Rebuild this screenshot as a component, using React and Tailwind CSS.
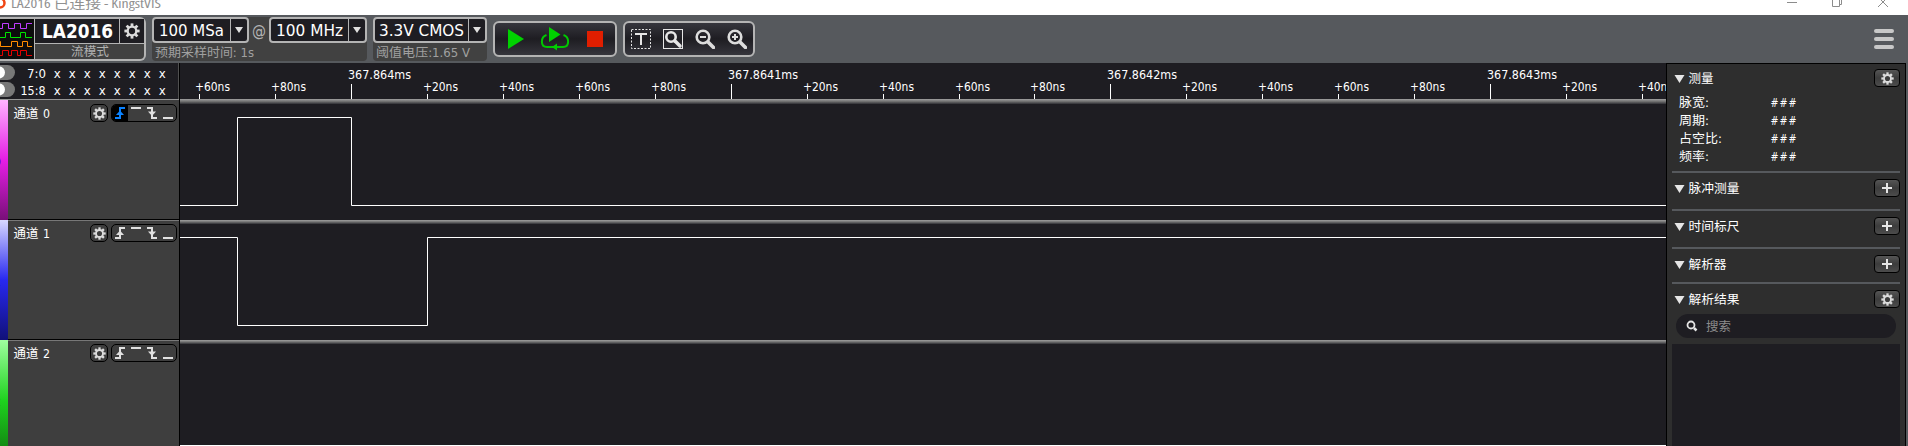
const UI = "font-['DejaVu_Sans_Condensed','DejaVu_Sans','Noto_Sans_CJK_SC',sans-serif] [font-stretch:condensed]";
const CJK = "font-['Noto_Sans_CJK_SC',sans-serif]";

function T({ x, y, w, size, children, fill = "#fff", bold }) {
  return (
    <text
      x={x}
      y={y}
      textLength={w}
      lengthAdjust="spacingAndGlyphs"
      fontSize={size}
      fontWeight={bold ? 700 : 400}
      fill={fill}
    >
      {children}
    </text>
  );
}

/* Single line of text fitted to a fixed width */
function Label({ w, h, size, base, children, fill, bold }) {
  return (
    <svg width={w} height={h} className="block shrink-0 overflow-visible">
      <T x={0} y={base} w={w} size={size} fill={fill} bold={bold}>{children}</T>
    </svg>
  );
}

function Gear({ size, color = "#dcdcdc" }) {
  return (
    <svg width={size} height={size} viewBox="-8 -8 16 16" className="block">
      <circle r="4.3" fill="none" stroke={color} strokeWidth="2.3" />
      {[0, 45, 90, 135, 180, 225, 270, 315].map((a) => (
        <rect key={a} x="-1.4" y="-7.6" width="2.8" height="3" fill={color} transform={`rotate(${a})`} />
      ))}
    </svg>
  );
}

function Logo() {
  return (
    <svg width="34" height="40" className="block bg-[#0c0c0c]">
      <g fill="none" strokeWidth="1">
        <path stroke="#c03cff" d="M0 9.500H2.500V4.500H8.500V9.500H14.500V4.500H20.500V9.500H26.500V4.500H32" />
        <path stroke="#00e600" d="M0 18.500H5.500V13.500H10.500V18.500H20.500V13.500H25.500V18.500H32" />
        <path stroke="#ff8c00" d="M0 22.500H.5V27.500H11.500V22.500H17.500V27.500H22.500V22.500H27.500V27.500H32" />
        <path stroke="#e60000" d="M0 36.500H2.500V31.500H8.500V36.500H11.500V31.500H17.500V36.500H20.500V31.500H26.500V36.500H32" />
      </g>
    </svg>
  );
}

function Combo({ text, textW, width, pad }) {
  return (
    <div className="flex h-[26px] rounded border-2 border-[#b4b4b4] bg-[#1e1d22]" style={{ width }}>
      <div className="flex-1" style={{ paddingLeft: pad }}>
        <Label w={textW} h={22} size={16} base={17}>{text}</Label>
      </div>
      <div className="flex w-[17px] items-center justify-center border-l border-[#b4b4b4]">
        <svg width="8" height="6"><path d="M0 0h8L4 6z" fill="#e0e0e0" /></svg>
      </div>
    </div>
  );
}

function Lens({ sign }) {
  return (
    <svg width="20" height="20" className="block" fill="none" stroke="#dcdcdc">
      <circle cx="8" cy="8" r="6.300" strokeWidth="2.600" />
      <path d="M13 13L18.500 18.500" strokeWidth="3.600" strokeLinecap="round" />
      <path d={sign === "+" ? "M5 8h6M8 5v6" : "M5 8h6"} strokeWidth="2" />
    </svg>
  );
}

function Toolbar() {
  return (
    <div className="flex h-12 shrink-0 items-start bg-[#56595d]">
      <div className="mt-[2px] flex h-11 w-[146px] rounded-r-md border-2 border-l-0 border-[#b4b4b4] bg-[#414141]">
        <Logo />
        <div className="flex flex-1 flex-col border-l border-[#b4b4b4]">
          <div className="flex h-[25px] border-b border-[#b4b4b4] bg-[#1e1d22]">
            <div className="w-[84px] pl-[7px]">
              <Label w={71} h={24} size={19.500} base={19} bold>LA2016</Label>
            </div>
            <div className="flex flex-1 items-center justify-center border-l border-[#b4b4b4]"><Gear size={16} /></div>
          </div>
          <div className={"flex justify-center " + CJK}>
            <Label w={38} h={15} size={12.500} base={12} fill="#b0b0b0">流模式</Label>
          </div>
        </div>
      </div>

      <div className="mt-[2px] ml-[6px] flex h-11 w-[215px] flex-col rounded bg-[#414141]">
        <div className="flex h-[26px]">
          <Combo text="100 MSa" textW={65} width={97} pad={5} />
          <div className="w-5 pl-[3px]"><Label w={14} h={26} size={15.500} base={18.500} fill="#b4b4b4">@</Label></div>
          <Combo text="100 MHz" textW={67} width={98} pad={5} />
        </div>
        <div className="pl-[3px]">
          <Label w={99} h={18} size={12.500} base={14} fill="#a0a0a0">预期采样时间: 1s</Label>
        </div>
      </div>

      <div className="mt-[2px] ml-[6px] flex h-11 w-[114px] flex-col rounded bg-[#414141]">
        <Combo text="3.3V CMOS" textW={85} width={114} pad={4} />
        <div className="pl-[3px]">
          <Label w={94} h={18} size={12.500} base={14} fill="#a0a0a0">阈值电压:1.65 V</Label>
        </div>
      </div>

      <div className="mt-[6px] ml-[6px] flex h-9 w-[124px] items-center rounded-md border-2 border-[#b4b4b4] bg-linear-to-b from-[#36363d] via-[#1e1d22] to-[#36363d]">
        <svg width="16" height="22" className="ml-[13px]"><path d="M0 1L16 11L0 21z" fill="#00d200" /></svg>
        <svg width="28" height="24" className="ml-[17px] overflow-visible">
          <path d="M5.500 8C-.5 10 -1 20 6 20H22C29 20 28.500 10 22.500 8" fill="none" stroke="#00c800" strokeWidth="2" />
          <path d="M8 0L19.500 7.500L8 15z" fill="#00d200" />
          <path d="M11 20l5-3.500v7z" fill="#00d200" />
        </svg>
        <div className="ml-[18px] size-4 bg-[#e01e00]" />
      </div>

      <div className="mt-[6px] ml-[6px] flex h-9 w-[132px] items-center gap-3 rounded-md border-2 border-[#b4b4b4] bg-linear-to-b from-[#36363d] via-[#1e1d22] to-[#36363d] pl-[6px]">
        <svg width="20" height="20" fill="none" stroke="#e6e6e6">
          <rect x=".5" y=".5" width="19" height="19" strokeDasharray="2 1.500" />
          <path d="M4 5h12M10 5v11" strokeWidth="2" />
        </svg>
        <svg width="20" height="20" fill="none" stroke="#e6e6e6">
          <rect x=".5" y=".5" width="19" height="19" />
          <circle cx="8" cy="8" r="4.700" strokeWidth="2.600" />
          <path d="M12 12l5 5" strokeWidth="3.500" strokeLinecap="round" />
        </svg>
        <Lens sign="-" />
        <Lens sign="+" />
      </div>

      <div className="mt-[14px] mr-[14px] ml-auto flex flex-col gap-1">
        {[0, 1, 2].map((i) => <div key={i} className="h-1 w-5 rounded-full bg-[#c8c8c8]" />)}
      </div>
    </div>
  );
}

const channels = [
  { name: 0, bar: "bg-[linear-gradient(#ffb4ff,#e61ee6_50%,#780f78)]", box: "h-[120px]", body: "border-b border-b-black pt-[4px]", on: true },
  { name: 1, bar: "bg-[linear-gradient(#d8d8ff,#2828f0_50%,#101078)]", box: "h-[120px]", body: "border-y border-t-[#787878] border-b-black pt-[3px]" },
  { name: 2, bar: "bg-[linear-gradient(#a0ffa0,#1ed21e_61px,#107810_119px)]", box: "h-[106px]", body: "border-t border-t-[#787878] pt-[3px]" },
];

function Trigger({ on }) {
  return (
    <div className="flex h-[18px] w-[66px] overflow-hidden rounded-[5px] border border-black bg-[#3e3e3e]">
      <svg width="64" height="16" className="block" fill="none" stroke="#e0e0e0" strokeWidth="2">
        {on && <rect width="16" height="16" fill="#000" stroke="none" />}
        <g stroke={on ? "#0a82ff" : "#e0e0e0"}>
          <path d="M3 13H8V3H13" />
          <path d="M4 10L8 5.500L12 10z" fill={on ? "#0a82ff" : "#e0e0e0"} stroke="none" />
        </g>
        <path d="M19 3h10" />
        <path d="M35 3h5v10h5" />
        <path d="M36 6.500h8L40 11z" fill="#e0e0e0" stroke="none" />
        <path d="M51 13h10" />
      </svg>
    </div>
  );
}

function LeftPanel() {
  return (
    <div className="flex w-[180px] shrink-0 flex-col border-r border-black">
      <div className="h-[36px] border-r border-[#505050] bg-[#1e1d22]">
        <svg width="178" height="36" className="block">
          {[9.500, 26.500].map((y) => (
            <g key={y}>
              <rect x="-15" y={y - 7.500} width="30" height="15" rx="7.500" fill="#787878" />
              <circle cx="-1" cy={y} r="6" fill="#fff" />
            </g>
          ))}
          <T x={27} y={15} w={19} size={12.500}>7:0</T>
          <T x={20.500} y={32} w={25} size={12.500}>15:8</T>
          {[15, 32].map((y) => Array.from({ length: 8 }, (_, i) => (
            <T key={y + "-" + i} x={53.700 + i * 15} y={y} w={7} size={12.500}>x</T>
          )))}
        </svg>
      </div>
      <div className="h-px bg-[#969696]" />
      {channels.map((c) => (
        <div key={c.name} className={"flex shrink-0 " + c.box}>
          <div className={"w-2 shrink-0 " + c.bar}>
            <svg width="8" height="106" className="block">
              <text x="-6" y="66" fontSize="12" fill="#000">{c.name}</text>
            </svg>
          </div>
          <div className={"flex flex-1 items-start bg-[#3e3e3e] " + c.body}>
            <svg width="82" height="20" className="block">
              <T x={5.500} y={13.500} w={25} size={12.500}>通道</T>
              <T x={35} y={13.500} w={7} size={12.500}>{c.name}</T>
            </svg>
            <div className="flex h-[18px] w-[18px] items-center justify-center rounded-[5px] border border-black"><Gear size={13} /></div>
            <div className="ml-[3px]"><Trigger on={c.on} /></div>
          </div>
        </div>
      ))}
    </div>
  );
}

function Canvas() {
  const ticks = Array.from({ length: 20 }, (_, i) => ({ i, x: Math.round(19 + i * 75.950) }));
  const minor = { 0: "+60ns", 1: "+80ns" };
  const names = ["+20ns", "+40ns", "+60ns", "+80ns"];
  const major = ["367.864ms", "367.8641ms", "367.8642ms", "367.8643ms"];
  return (
    <div className="w-[1486px] shrink-0 overflow-hidden bg-[#1e1d22]">
      <svg width="1486" height="383" className="block">
        <defs>
          <linearGradient id="edge" x2="0" y2="1">
            <stop offset="0" stopColor="#a0a0a0" />
            <stop offset=".5" stopColor="#707070" />
            <stop offset="1" stopColor="#303035" />
          </linearGradient>
        </defs>
        {ticks.map(({ i, x }) => {
          const k = (i + 3) % 5;
          const isMajor = k === 0;
          const m = (i - 2) / 5;
          return (
            <g key={i}>
              <rect x={x} y={isMajor ? 21 : 31} width="1" height={isMajor ? 15 : 5} fill="#fff" />
              {isMajor
                ? <T x={x - 3} y={16} w={m === 0 ? 63 : 70} size={12.500}>{major[m]}</T>
                : <T x={x - 4} y={28} w={35} size={12.500}>{minor[i] || names[k - 1]}</T>}
            </g>
          );
        })}
        <rect y="36" width="1486" height="5" fill="url(#edge)" />
        <rect y="157" width="1486" height="4" fill="url(#edge)" />
        <rect y="277" width="1486" height="4" fill="url(#edge)" />
        <g fill="none" stroke="#fff" strokeWidth="1">
          <path d="M0 142.500H57.500V54.500H171.500V142.500H1486" />
          <path d="M0 174.500H57.500V262.500H247.500V174.500H1486" />
          <path d="M0 382.500H1486" />
        </g>
      </svg>
    </div>
  );
}

function Section({ title, w, icon, h, children }) {
  return (
    <div className={"shrink-0 " + h}>
      <div className="flex items-start">
        <svg width="200" height="18" className={"block " + CJK}>
          <path d="M2.500 6h10l-5 8z" fill="#e6e6e6" />
          <T x={16.500} y={13.500} w={w} size={12.500}>{title}</T>
        </svg>
        <div className="ml-[2px] flex h-[18px] w-[26px] items-center justify-center rounded-[4px] border border-black bg-linear-to-b from-[#555] via-[#3c3c3c] to-[#4c4c4c]">
          {icon === "gear" ? <Gear size={13} /> : (
            <svg width="10" height="10"><path d="M0 5h10M5 0v10" stroke="#e6e6e6" strokeWidth="2" /></svg>
          )}
        </div>
      </div>
      {children}
    </div>
  );
}

function Rule() {
  return <div className="mb-[6px] h-[2px] shrink-0 bg-[#56595d]" />;
}

function Sidebar() {
  const rows = [["脉宽:", 30], ["周期:", 30], ["占空比:", 43], ["频率:", 30]];
  return (
    <div className="flex w-[240px] shrink-0 flex-col border-x border-t border-black bg-[#2e2e2e] px-[5px] pt-[5px]">
      <Section title="测量" w={25} icon="gear" h="h-[102px]">
        <div className="pt-[6px]">
          {rows.map(([t, w]) => (
            <svg key={t} width="200" height="18" className="block">
              <T x={7} y={13.500} w={w} size={12.500}>{t}</T>
              {[0, 1, 2].map((i) => <T key={i} x={98.500 + i * 9} y={13.500} w={8} size={12}>#</T>)}
            </svg>
          ))}
        </div>
      </Section>
      <Rule />
      <Section title="脉冲测量" w={51} icon="plus" h="h-[30px]" />
      <Rule />
      <Section title="时间标尺" w={51} icon="plus" h="h-[30px]" />
      <Rule />
      <Section title="解析器" w={38} icon="plus" h="h-[27px]" />
      <Rule />
      <Section title="解析结果" w={51} icon="gear" h="h-[24px]" />
      <div className="mx-1 flex h-6 shrink-0 items-center rounded-full bg-[#1e1d22]">
        <svg width="60" height="24" className="block" fill="none" stroke="#e6e6e6">
          <circle cx="15" cy="11" r="3.500" strokeWidth="1.800" />
          <path d="M18 14l2.500 2.500" strokeWidth="2.500" />
          <g stroke="none"><T x={30} y={16.500} w={25} size={12.500} fill="#8c8c8c">搜索</T></g>
        </svg>
      </div>
      <div className="mt-[6px] flex-1 bg-[#1e1d22]" />
    </div>
  );
}

function TitleBar() {
  return (
    <div className="flex h-[15px] shrink-0 overflow-hidden bg-white">
      <svg width="400" height="15" className="block font-['Open_Sans','Noto_Sans_CJK_SC',sans-serif]">
        <circle cx="0" cy="3" r="4.500" fill="none" stroke="#f04614" strokeWidth="2.500" />
        <T x={11} y={8} w={150} size={13} fill="#919191">LA2016 已连接 - KingstVIS</T>
      </svg>
      <svg width="110" height="15" className="mr-[8px] ml-auto block overflow-visible" fill="none" stroke="#8c8c8c">
        <path d="M-3 2.500H7" />
        <path d="M42.500 0V6.500H49.500V0M49.500 4.500H51.500V0" />
        <path d="M88 7L93 2L98 7M93 2L90-1M93 2L96-1" />
      </svg>
    </div>
  );
}

export default function App() {
  return (
    <div className={"flex h-[446px] w-[1908px] flex-col overflow-hidden bg-[#56595d] text-white " + UI}>
      <TitleBar />
      <Toolbar />
      <div className="flex h-[383px] shrink-0">
        <LeftPanel />
        <Canvas />
        <Sidebar />
      </div>
    </div>
  );
}
